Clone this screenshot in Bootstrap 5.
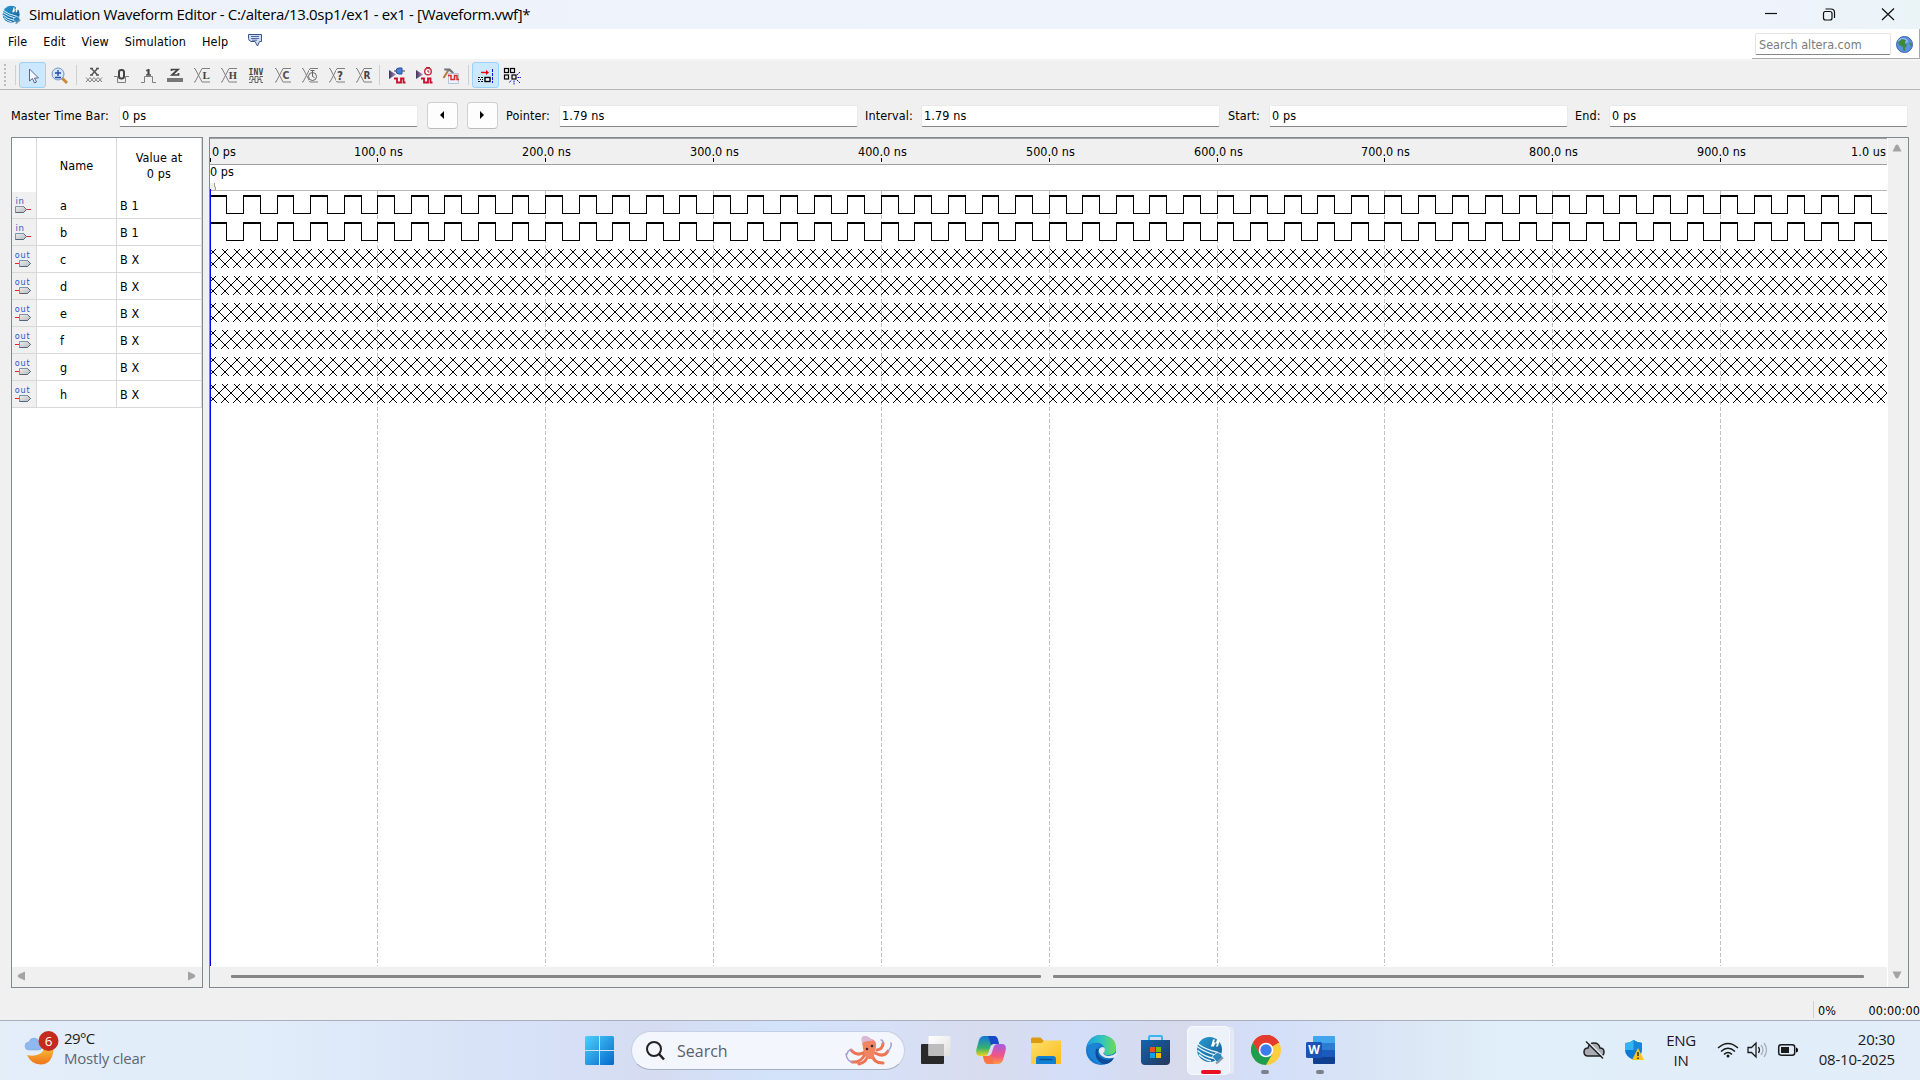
<!DOCTYPE html>
<html lang="en">
<head>
<meta charset="utf-8">
<title>Simulation Waveform Editor</title>
<link rel="stylesheet" href="https://cdn.jsdelivr.net/npm/bootstrap@5.3.0/dist/css/bootstrap.min.css">
<style>
  html, body { width: 1920px; height: 1080px; overflow: hidden; }
  body { font-family: "DejaVu Sans Condensed", "DejaVu Sans", sans-serif; font-stretch: condensed; font-size: 12.5px; letter-spacing: .13px; line-height: 16px; color: #000; background: #f0f0f0; }
  svg { display: block; flex: none; }
  .segoe { font-family: "Open Sans", "Noto Sans", sans-serif; font-stretch: normal; letter-spacing: 0; }
  .titlebar { height: 29px; background: linear-gradient(90deg, #eef3fb 0, #eff3fb 1750px, #eaf4f7 1920px); }
  .titlebar .caption { font-size: 15px; letter-spacing: -.35px; margin: 0 0 2px 8px; width: 502px; white-space: nowrap; }
  .menubar { height: 30px; background: #fff; }
  .menus { gap: 16px; padding: 5px 0 0 8px; }
  .sitesearch { width: 168px; border-right: 1px solid #aaa; border-bottom: 1px solid #aaa; padding: 4px 0 0 3px; }
  .sitebox { width: 136px; height: 22px; border: 1px solid #e4e4e4; border-bottom: 1px solid #868686; border-radius: 2px; color: #7b7b7b; padding: 3px 0 0 3px; font-size: 12.5px; letter-spacing: 0; white-space: nowrap; }
  .toolbar { height: 31px; border-top: 2px solid #f4f4f4; border-bottom: 1px solid #b7b7b7; background: #f0f0f0; padding-left: 4px; }
  .grip { width: 2px; height: 23px; background: repeating-linear-gradient(#bdbdbd 0 2px, transparent 2px 4px); }
  .rule { width: 1px; height: 20px; background: #d0d0d0; }
  .tool { width: 27px; height: 26px; display: flex; align-items: center; justify-content: center; border: 1px solid transparent; border-radius: 3px; padding-top: 1px; }
  .tool.on { background: #cce8ff; border-color: #99d1ff; }
  .timebar { height: 47px; padding: 12px 12px 0 11px; }
  .field { height: 22px; background: #fff; border: 1px solid #e9e9e9; border-bottom: 1px solid #868686; border-radius: 2px; padding: 2px 0 0 2px; width: 299px; flex: none; }
  .timebar .lbl { flex: none; white-space: nowrap; }
  .step { width: 31px; height: 27px; border: 1px solid #d0d0d0; border-bottom-color: #bbb; background: #fdfdfd; border-radius: 4px; display: flex; align-items: center; justify-content: center; flex: none; }
  .step svg { margin: -2px 2px 0 0; }
  .panes { height: 851px; padding-left: 11px; gap: 6px; }
  .pane { border: 1px solid #828790; background: #fff; }
  .signals { width: 192px; }
  .siggrid { display: grid; grid-template-columns: 25px 80px 85px; }
  .siggrid > div { border-right: 1px solid #d8d8d8; }
  .hd { height: 54px; display: flex; align-items: center; justify-content: center; text-align: center; padding-top: 2px; }
  .cellx { height: 27px; border-bottom: 1px solid #d8d8d8; display: flex; align-items: center; padding-top: 2px; }
  .icocell { background: #f0f0f0; padding-top: 0; }
  .hbar { height: 20px; background: #f0f0f0; margin-top: auto; padding-bottom: 2px; }
  .waves { width: 1700px; }
  .vbar { width: 21px; background: #f0f0f0; border-left: 1px solid #fff; }
  .status { height: 32px; padding-top: 13px; }
  .status .part { border-left: 1px solid #d0d0d0; width: 107px; height: 17px; padding-left: 4px; padding-top: 2px; }
  .taskbar { height: 60px; border-top: 1px solid #a8b0c0; background: linear-gradient(90deg, #e3eef9 0, #e0ecf9 280px, #d7e1f7 520px, #d5dcf2 660px, #d2e3fa 780px, #d6e0f7 880px, #d8dcee 980px, #d3def8 1080px, #d7daeb 1180px, #d3dff9 1270px, #dbe6f5 1400px, #e0eff9 1500px, #e2edf9 1920px); font-size: 15px; line-height: 20px; color: #1b1b1b; }
  .pill { width: 274px; height: 39px; border-radius: 20px; background: #f3f6fd; border: 1px solid #c5d0e4; border-bottom-color: #a5afc2; }
  .apptile { width: 55px; height: 59px; position: relative; display: flex; align-items: center; justify-content: center; flex: none; }
  .run::after { content: ""; position: absolute; bottom: 6px; left: 23px; width: 8px; height: 4px; border-radius: 2px; background: #7b828d; }
  .active-app::after { content: ""; position: absolute; bottom: 6px; left: 18px; width: 20px; height: 4px; border-radius: 2px; background: #e81123; }
  .active-app > .plate { position: absolute; left: 4px; top: 5px; width: 43px; height: 49px; border-radius: 5px; background: #edf1fa; border: 1px solid #f7f9fd; box-shadow: 5px 0 0 -1px #e3e9f7; }
  .active-app > svg { position: relative; }
</style>
<script src="https://cdn.jsdelivr.net/npm/bootstrap@5.3.0/dist/js/bootstrap.bundle.min.js"></script>
</head>
<body class="d-flex flex-column">

<svg width="0" height="0" class="position-absolute">
  <defs>
    <linearGradient id="gBall" x1="0" y1="0" x2="1" y2="1"><stop offset="0" stop-color="#2a9bd4"/><stop offset="1" stop-color="#135c93"/></linearGradient>
    <linearGradient id="gWin" x1="0" y1="0" x2="1" y2="1"><stop offset="0" stop-color="#4cd0fb"/><stop offset="1" stop-color="#0369cd"/></linearGradient>
    <linearGradient id="gPin" x1="0" y1="0" x2="1" y2="1"><stop offset="0" stop-color="#eee"/><stop offset="1" stop-color="#b5b9bd"/></linearGradient>
    <linearGradient id="gTri" x1="0" y1="0" x2="1" y2="0"><stop offset="0" stop-color="#3f3258"/><stop offset="1" stop-color="#a890c8"/></linearGradient>
    <symbol id="quartus" viewBox="0 0 28 28">
      <circle cx="13.5" cy="13" r="12.5" fill="url(#gBall)"/>
      <path d="M1 10Q9 16 21 19M1.500 7Q9 13 22 16M1.500 14Q8 20 18 22M3 18Q8 23 15 24.500" fill="none" stroke="#e6f5fd" stroke-width="1.400"/>
      <path d="M15 10l2-7h2l-1 3h2l1-3h3l-2 7h-2l1-3h-2l-1 3z" fill="#fff"/>
      <path d="M16 20l5-4 4 1 2 5-5 5z" fill="#2c87bd" stroke="#d8e8f2"/>
      <path d="M20 27l7-6" stroke="#8c98a2" stroke-width="2"/>
    </symbol>
    <symbol id="pinIn" viewBox="0 0 18 18">
      <path d="M11 13.500h5" stroke="#e22"/><path d="M.5 10.500h8l3 3-3 3h-8z" fill="url(#gPin)" stroke="#7e93ad"/><path d="M8.500 10.500l3 3-3 3h-8" fill="none" stroke="#55657a"/>
      <text x=".5" y="8" font-family="DejaVu Sans" font-size="9.500" fill="#3355bb" textLength="8.500">in</text>
    </symbol>
    <symbol id="pinOut" viewBox="0 0 18 18">
      <path d="M0 13.500h5" stroke="#e22"/><path d="M4.500 10.500h8l3 3-3 3h-8z" fill="url(#gPin)" stroke="#7e93ad"/><path d="M12.500 10.500l3 3-3 3h-8" fill="none" stroke="#55657a"/>
      <text x="-.3" y="8" font-family="DejaVu Sans" font-size="9" fill="#3355bb" textLength="15">out</text>
    </symbol>
    <symbol id="bus" viewBox="0 0 18 18"><path d="M1 1.500h1l7 13.500h8M1 15h1l7-13.500h8" fill="none" stroke="#808080"/></symbol>
  </defs>
</svg>

<div class="titlebar d-flex align-items-center">
  <svg style="margin-left:2px" width="19" height="20"><use href="#quartus"/></svg>
  <div class="caption segoe">Simulation Waveform Editor - C:/altera/13.0sp1/ex1 - ex1 - [Waveform.vwf]*</div>
  <svg class="ms-auto" width="156" height="29" fill="none" stroke="#111" stroke-width="1.200">
    <path d="M1 13.500h12"/><path d="M60.500 11.500h5.500q2 0 2 2v4.500q0 2-2 2h-4.500q-2 0-2-2v-4.500q0-2 2-2M61.500 9h5.500q3.500 0 3.500 3.500v5.500" /><path d="M118 8.500l12 11.500M130 8.500l-12 11.500"/>
  </svg>
</div>

<div class="menubar d-flex">
  <div class="menus d-flex align-items-start">
    <span>File</span><span>Edit</span><span>View</span><span>Simulation</span><span>Help</span>
    <svg style="margin:-1px 0 0 3px" width="16" height="15"><path d="M1.500 1.500h13v7h-2l-2 4.500-2.500-4.500h-4q-2.500-1-2.500-3z" fill="#cfdcf2" stroke="#3d5687"/><path d="M4 3.500h8M4 5.500h8M5 7.200h5" stroke="#33507e" stroke-width=".8"/></svg>
  </div>
  <div class="sitesearch d-flex ms-auto gap-1">
    <div class="sitebox">Search altera.com</div>
    <svg style="margin:3px 0 0 1px" width="17" height="17"><circle cx="8.500" cy="8.500" r="8" fill="#5b8fe0" stroke="#3c62b4"/><ellipse cx="7" cy="5" rx="5" ry="3" fill="#a9cbf6" opacity=".7"/><path d="M2 6l4-3 4 1-1 3 2 2-2 3v3l-2-1v-3l-4-2zM13 6l3 2-1 3z" fill="#3d8a3c"/></svg>
  </div>
</div>

<div class="toolbar d-flex align-items-center">
  <div class="grip"></div><div class="rule" style="margin:0 3px 0 9px"></div>
  <div class="tool on"><svg width="18" height="18"><path d="M5.500 2v12l3-2.500 2 4.500 2-1-2-4h4z" fill="#f4f7fd" stroke="#5b6788"/></svg></div>
  <div class="tool"><svg width="18" height="18"><path d="M11 11l5 5" stroke="#c98a3c" stroke-width="3"/><circle cx="7" cy="7" r="6" fill="#d4e6fb" stroke="#6f95c6"/><path d="M4 6h6M7 3v6M4 10.500h6" stroke="#2348b0" stroke-width="1.300"/></svg></div>
  <div class="rule" style="margin:0 3px 0 3px"></div>
  <div class="tool"><svg width="18" height="18"><path d="M5 1.500h3M11 1.500h3M5 8h3M11 8h3M6.500 1.500l6 6.500M12.500 1.500l-6 6.500" stroke="#555" stroke-width="1.500"/><path d="M1 10.500l4 4.500 4-4.500 4 4.500 4-4.500M1 15l4-4.500 4 4.500 4-4.500 4 4.500" fill="none" stroke="#808080"/></svg></div>
  <div class="tool"><svg width="18" height="18"><path d="M2 9.500h3.500v6h8v-6h3.500" fill="none" stroke="#808080"/><rect x="7" y="3" width="5" height="8.500" rx="2.200" fill="none" stroke="#444" stroke-width="2"/></svg></div>
  <div class="tool"><svg width="18" height="18"><path d="M2 15.500h3.500v-6h8v6h3.500" fill="none" stroke="#808080"/><path d="M7 3.500h2.500v4M7 8h5" fill="none" stroke="#555" stroke-width="1.300"/><path d="M9.500 2v6" stroke="#444" stroke-width="2"/></svg></div>
  <div class="tool"><svg width="18" height="18"><path d="M5.500 4v-1.500h6.500l-6 5.500h6.500v-2" fill="none" stroke="#444" stroke-width="1.700"/><rect x="1" y="11" width="16" height="4" fill="#777"/></svg></div>
  <div class="tool"><svg width="18" height="18"><use href="#bus"/><rect x="9" y="4" width="8" height="9" fill="#f0f0f0"/><text x="9.500" y="12" font-family="Liberation Serif" font-weight="bold" font-size="11" fill="#444">L</text></svg></div>
  <div class="tool"><svg width="18" height="18"><use href="#bus"/><rect x="9" y="4" width="8" height="9" fill="#f0f0f0"/><text x="8.800" y="12" font-family="Liberation Serif" font-weight="bold" font-size="10.500" fill="#444">H</text></svg></div>
  <div class="tool"><svg width="18" height="18"><text x="1.500" y="7.500" font-family="DejaVu Sans Mono" font-weight="bold" font-size="8" textLength="15" fill="#444">INV</text><path d="M2 12.500h1v-3h3v3h2v-3h3v3h2v-3h3M2 15.500h3v-3h3v3h3v-3h3v3h2" fill="none" stroke="#666"/></svg></div>
  <div class="tool"><svg width="18" height="18"><use href="#bus"/><rect x="9" y="4" width="8" height="9" fill="#f0f0f0"/><text x="8.500" y="12" font-family="DejaVu Sans" font-weight="bold" font-size="10.500" fill="#555">C</text></svg></div>
  <div class="tool"><svg width="18" height="18"><use href="#bus"/><rect x="8" y="3" width="9" height="11" fill="#f0f0f0"/><circle cx="11.500" cy="9.500" r="4" fill="none" stroke="#666"/><path d="M9.500 3.500h4M11.500 3.500v6l2 1" stroke="#666" fill="none"/></svg></div>
  <div class="tool"><svg width="18" height="18"><use href="#bus"/><rect x="8" y="3" width="9" height="11" fill="#f0f0f0"/><text x="9" y="12.500" font-family="DejaVu Sans" font-weight="bold" font-size="11.500" fill="#444">?</text></svg></div>
  <div class="tool"><svg width="18" height="18"><use href="#bus"/><rect x="9" y="4" width="8" height="9" fill="#f0f0f0"/><text x="8.500" y="12" font-family="DejaVu Sans" font-weight="bold" font-size="10" fill="#444">R</text></svg></div>
  <div class="rule" style="margin:0 3px 0 2px"></div>
  <div class="tool"><svg width="18" height="18"><path d="M1 3l7 4.500-7 4.500z" fill="url(#gTri)"/><path d="M6 4h2M14 4h3" stroke="#444"/><path d="M8 4q0-3 3-3h3v6h-3q-3 0-3-3z" fill="#4c7fd0" stroke="#2a4f9c"/><path d="M6 11.500h3v4h4v-4h2.500v4h2" fill="none" stroke="#c8102e" stroke-width="1.800"/></svg></div>
  <div class="tool"><svg width="18" height="18"><path d="M1 3l7 4.500-7 4.500z" fill="url(#gTri)"/><circle cx="13" cy="4.500" r="3.300" fill="#fff" stroke="#c8334e" stroke-width="1.500"/><path d="M13 3v2h1.500M11 .5h4" stroke="#a22" fill="none"/><path d="M6 11.500h3v4h4v-4h2.500v4h2" fill="none" stroke="#c8102e" stroke-width="1.800"/></svg></div>
  <div class="tool"><svg width="18" height="18"><path d="M6.500 6.500h10v10h-10z" fill="#eef2fb" stroke="#b6c3dc"/><path d="M6.500 3l-5 8" stroke="#b87939" stroke-width="2"/><path d="M2 1.500l6 0 4 4-1.500 1-4-3-4 0z" fill="#6a737d"/><path d="M6 8.500h3v4h3.500v-4h2.500v4h2" fill="none" stroke="#e02a2a" stroke-width="1.500"/></svg></div>
  <div class="rule" style="margin:0 3px 0 4px"></div>
  <div class="tool on"><svg width="18" height="18"><path d="M4 5.500h6" stroke="#e00" stroke-width="1.400"/><path d="M9 3l3 2.500-3 2.500z" fill="#e00"/><path d="M15.500 2v14" stroke="#1414e0" stroke-dasharray="3 1"/><path d="M1 10.500h6M1 14.500h6" stroke="#000" stroke-dasharray="2 1"/><path d="M1 12.500h6" stroke="#000" stroke-dasharray="1 1"/><rect x="8" y="10.500" width="5" height="4" fill="#fff" stroke="#000" stroke-width="1.400"/></svg></div>
  <div class="tool"><svg width="18" height="18" style="margin-left:-1px"><g fill="none" stroke="#000" stroke-width="1.200"><rect x="1.500" y="1.500" width="4" height="4"/><rect x="7.500" y="1.500" width="4" height="4"/><rect x="1.500" y="8" width="4" height="4"/><rect x="9" y="8" width="4" height="4"/></g><path d="M14 8l3-3M14.500 10.500h3.500M14 13l3 3M11 13.500v4M8 13.500l-2 2.500" stroke="#1414e0" stroke-dasharray="2 .6"/></svg></div>
</div>

<div class="timebar d-flex align-items-start">
  <div class="d-flex align-items-center" style="height:27px">
    <span class="lbl" style="width:108px">Master Time Bar:</span><div class="field">0 ps</div>
    <div class="step" style="margin-left:9px"><svg width="6" height="8"><path d="M5 0v8l-4-4z"/></svg></div>
    <div class="step" style="margin-left:9px"><svg width="6" height="8"><path d="M1 0v8l4-4z"/></svg></div>
    <span class="lbl" style="width:53px;margin-left:8px">Pointer:</span><div class="field">1.79 ns</div>
    <span class="lbl" style="width:56px;margin-left:7px">Interval:</span><div class="field">1.79 ns</div>
    <span class="lbl" style="width:41px;margin-left:8px">Start:</span><div class="field">0 ps</div>
    <span class="lbl" style="width:34px;margin-left:7px">End:</span><div class="field">0 ps</div>
  </div>
</div>

<div class="panes d-flex">
  <div class="pane signals d-flex flex-column">
    <div class="siggrid" id="siggrid">
      <div class="hd"></div><div class="hd">Name</div><div class="hd">Value at<br>0 ps</div>
    </div>
    <div class="hbar d-flex align-items-center justify-content-between px-1">
      <svg width="12" height="12"><path d="M9 1.500v9l-6.500-3q-1.500-1.500 0-3z" fill="#a3a3a3"/></svg>
      <svg width="12" height="12"><path d="M2 1.500v9l6.500-3q1.500-1.500 0-3z" fill="#a3a3a3"/></svg>
    </div>
  </div>
  <div class="pane waves d-flex">
    <div class="d-flex flex-column">
      <svg id="plot" width="1677" height="829" viewBox="210 138 1677 829" font-size="12.5"></svg>
      <div class="hbar d-flex align-items-center" style="padding-left:21px">
        <svg width="1640" height="3" fill="#858585"><rect width="810" height="3" rx="1"/><rect x="822" width="811" height="3" rx="1"/></svg>
      </div>
    </div>
    <div class="vbar d-flex flex-column justify-content-between align-items-center" style="padding:4px 2px 6px 0">
      <svg width="12" height="12"><path d="M1.500 9.500h9l-3-6q-1.500-2-3 0z" fill="#a3a3a3"/></svg>
      <svg width="12" height="12"><path d="M1.500 2.500h9l-3 6q-1.500 2-3 0z" fill="#a3a3a3"/></svg>
    </div>
  </div>
</div>

<div class="status d-flex justify-content-end">
  <div class="part d-flex justify-content-between"><span>0%</span><span class="text-nowrap">00:00:00</span></div>
</div>

<div class="taskbar segoe d-flex align-items-center">
  <div class="d-flex align-items-center" style="width:572px;padding-left:24px">
    <svg width="36" height="36" style="margin-top:-6px"><defs><linearGradient id="gm" x1="0" y1="0" x2="0" y2="1"><stop offset="0" stop-color="#f9c23c"/><stop offset="1" stop-color="#ee7418"/></linearGradient></defs><path d="M3 25q4 9 13.500 9.500q12-.5 13-15l-9-3q-1 6-6 8-5 2-11.500.5z" fill="url(#gm)"/><path d="M5 20q-4 0-4-4 0-4 4-4 1-4 5-4t5 4q3 0 3 4t-3 4z" fill="#8fb8ef" stroke="#79a3e3" stroke-width=".5"/><circle cx="24.500" cy="11" r="10" fill="#c42b1c"/><text x="24.500" y="16" text-anchor="middle" font-size="13.500" fill="#fff">6</text></svg>
    <div style="margin:-5px 0 0 4px"><div style="letter-spacing:-.6px">29°C</div><div style="color:#5f6670;letter-spacing:-.22px" class="text-nowrap">Mostly clear</div></div>
  </div>
  <div class="apptile"><svg width="29" height="29"><path d="M0 1.500q0-1.500 1.500-1.500h12.500v14h-14zM15 0h12.500q1.500 0 1.500 1.500v12.500h-14zM0 15h14v14h-12.500q-1.500 0-1.500-1.500zM15 15h14v12.500q0 1.500-1.500 1.500h-12.500z" fill="url(#gWin)"/></svg></div>
  <div class="pill d-flex align-items-center" style="margin-left:4px;padding-left:14px;padding-right:11px">
    <svg width="20" height="20" fill="none" stroke="#222"><circle cx="8" cy="8" r="7" stroke-width="2"/><path d="M13 13l5 5.500" stroke-width="2.600"/></svg>
    <span style="margin-left:11px;font-size:16px;color:#5b5f66">Search</span>
    <svg class="ms-auto" width="48" height="32" fill="none" stroke-linecap="round">
      <g stroke="#ee7553" stroke-width="3"><path d="M20 19q-4 9-13 8M23 20q-2 8-9 9M27 19q1 9 11 9M30 18q9 5 13-2M20 17q-8 5-14-2M32 15q6-1 6-7"/></g>
      <g stroke="#a69bd6" stroke-width="1.500"><path d="M7 27q-5-1-6-8M6 15q-3 0-4 4M43 16q4-4 3-8M38 8q0-3-2-3"/></g>
      <path d="M17 3q4-4 9 1 6 1 5 8-1 6-3 12h-6q-5-8-5-21z" fill="#f28561"/><path d="M17 8q-2-8 3-7 5 1 8 5-5-1-11 2z" fill="#d9b8d8"/><circle cx="22" cy="14" r="1.300" fill="#423"/><circle cx="27" cy="11" r="1.300" fill="#423"/>
    </svg>
  </div>
  <div class="d-flex" style="margin-left:3px;margin-top:-1px">
    <div class="apptile"><svg width="30" height="28"><defs><linearGradient id="tv" x1="0" y1="0" x2="1" y2="1"><stop offset="0" stop-color="#fff"/><stop offset="1" stop-color="#e0e0e0"/></linearGradient></defs><rect y="8" width="23" height="20" rx="1" fill="#292929"/><rect x="7.500" width="22" height="20" rx="1" fill="url(#tv)"/><rect x="7.500" y="8" width="15.500" height="12" fill="#bdbdbd"/></svg></div>
    <div class="apptile"><svg width="30" height="28"><defs><linearGradient id="c1" x1="0" y1="0" x2="0" y2="1"><stop offset="0" stop-color="#1676dc"/><stop offset=".6" stop-color="#35b26f"/><stop offset="1" stop-color="#f0d51c"/></linearGradient><linearGradient id="c2" x1="0" y1="0" x2="0" y2="1"><stop offset="0" stop-color="#a65be8"/><stop offset=".6" stop-color="#f2567f"/><stop offset="1" stop-color="#ff9b48"/></linearGradient></defs><path d="M8 0h10q3 0 4 4l1 4h-5q-3 0-4 4l-2 6q-1 2-4 2h-4q-5 0-3.500-7l2.500-9q1.500-4 5-4z" fill="url(#c1)"/><path d="M12 0h6q3 0 4 4l1 4h-5q-2 0-3 1z" fill="#1749c8"/><path d="M22 28h-10q-3 0-4-4l-1-4h5q3 0 4-4l2-6q1-2 4-2h4q5 0 3.500 7l-2.500 9q-1.500 4-5 4z" fill="url(#c2)"/><path d="M18 28h-6q-3 0-4-4l-1-4h5q2 0 3-1z" fill="#f9703f" opacity=".8"/></svg></div>
    <div class="apptile"><svg width="30" height="28" style="margin-top:2px"><defs><linearGradient id="fo" x1="0" y1="0" x2="1" y2="1"><stop offset="0" stop-color="#ffdf6b"/><stop offset="1" stop-color="#fbbb1c"/></linearGradient></defs><path d="M0 2q0-1.500 1.500-1.500h8l3 3v4h-12.500z" fill="#dc9a10"/><path d="M0 6h11l2-2.500h17v22.500q0 1-1 1h-28q-1 0-1-1z" fill="url(#fo)"/><path d="M5 27v-5q0-3 3-3h14q3 0 3 3v5z" fill="#1180d2"/><path d="M9 22.500h12" stroke="#0a5296" stroke-width="1.500" stroke-linecap="round"/></svg></div>
    <div class="apptile"><svg width="30" height="30"><defs><linearGradient id="e1" x1="0" y1="0" x2="1" y2="0"><stop offset="0" stop-color="#1d9fde"/><stop offset=".5" stop-color="#30c5c0"/><stop offset="1" stop-color="#6fdc50"/></linearGradient></defs><circle cx="15" cy="15" r="15" fill="#1777cb"/><path d="M1 11q3-11 14-11 15 1 15 13 0 7-7 7-5 0-6-2 3-2 1-6-3-5-9-4-5 1-8 3z" fill="url(#e1)"/><path d="M9 14q-2 11 8 15 7 1 11-6-8 4-14-1-4-4-1-8z" fill="#0d4c9a"/><path d="M13 14q4-4 6 0 0 3-2 4 1 3 6 3 4 0 7-3l0 4q-9 3-14-1-4-3-3-7z" fill="#e4e8f4"/><path d="M1 11q0 12 12 18l4 1q-10-7-7-16 2-4 6-4-8-4-15 1z" fill="#1b84d4"/></svg></div>
    <div class="apptile"><svg width="29" height="30"><defs><linearGradient id="st" x1="0" y1="0" x2="1" y2="1"><stop offset="0" stop-color="#0e66b5"/><stop offset="1" stop-color="#283656"/></linearGradient></defs><path d="M8 6v-4q0-1 1-1h11q1 0 1 1v4" fill="none" stroke="#35b7f0" stroke-width="2"/><path d="M0 5h29v21q0 4-4 4h-21q-4 0-4-4z" fill="url(#st)"/><path d="M9 12h5v5h-5z" fill="#f25022"/><path d="M15 12h5v5h-5z" fill="#7fba00"/><path d="M9 18h5v5h-5z" fill="#00a4ef"/><path d="M15 18h5v5h-5z" fill="#ffb900"/></svg></div>
    <div class="apptile active-app"><div class="plate"></div><svg width="28" height="29" style="margin-left:-1px"><use href="#quartus"/></svg></div>
    <div class="apptile run"><svg width="30" height="30" viewBox="0 0 30 30"><circle cx="15" cy="15" r="15" fill="#ffcd40"/><path d="M15 15L2 7.500a15 15 0 0 1 26 0z" fill="#e33b2e"/><path d="M2 7.500a15 15 0 0 0 13 22.500l6.500-11.300-13-1z" fill="#1f9d4f"/><path d="M15 8h13.300a15 15 0 0 0-26.300-.5l6.500 11z" fill="#e33b2e"/><circle cx="15" cy="15" r="7.300" fill="#fff"/><circle cx="15" cy="15" r="5.700" fill="#3b7ded"/></svg></div>
    <div class="apptile run"><svg width="30" height="28"><path d="M8 0h20q1 0 1 1v6h-22v-6q0-1 1-1z" fill="#41a5ee"/><path d="M7 7h22v7h-22z" fill="#2b7cd3"/><path d="M7 14h22v7h-22z" fill="#185abd"/><path d="M7 21h22v6q0 1-1 1h-20q-1 0-1-1z" fill="#103f91"/><rect y="6" width="16" height="16" rx="1.500" fill="#1a53b4"/><text x="8" y="18" text-anchor="middle" font-size="12" font-weight="bold" fill="#fff">W</text></svg></div>
  </div>
  <div class="d-flex align-items-center ms-auto" style="padding-right:25px;margin-top:-2px">
    <svg width="22" height="20"><path d="M5 16q-4 0-4-4t4-4q1-5 6-5t6 5q4 0 4 4t-4 4z" fill="#a9adb3" stroke="#222" stroke-width="1.500"/><path d="M5.500 2l17 17" stroke="#e3edf8" stroke-width="1.500"/><path d="M3 1.500l17 17" stroke="#222" stroke-width="1.400"/></svg>
    <svg width="20" height="22" style="margin-left:19px"><path d="M9.500 1q4 3 8.500 3v7q0 6-8.500 10-8.500-4-8.500-10v-7q5 0 8.500-3z" fill="#0b79d6"/><path d="M9.500 1q4 3 8.500 3v7h-17v-7q5 0 8.500-3z" fill="#35b2f2"/><path d="M9.500 1q4 3 8.500 3v7h-8.500z" fill="#1586dc"/><path d="M14 9l6 12h-12z" fill="#fcc419"/><path d="M14 13v4M14 18.500v1.500" stroke="#222" stroke-width="1.400"/></svg>
    <div class="text-center" style="margin-left:22px;width:30px;letter-spacing:-.3px">ENG<br>IN</div>
    <svg width="22" height="18" style="margin-left:21px" fill="none" stroke="#1b1b1b" stroke-width="1.500"><path d="M1 7q10-9 20 0M4 10.500q7-6.500 14 0M7 13.500q4-4 8 0"/><circle cx="11" cy="15" r="1.500" fill="#1b1b1b" stroke="none"/></svg>
    <svg width="22" height="18" style="margin-left:8px" fill="none" stroke="#1b1b1b" stroke-width="1.300"><path d="M1 6.500h3.500l4.500-4.500v14l-4.500-4.500h-3.500zM11.500 6q2 3 0 6"/><path d="M14 4q4 5 0 10M17 2q5 7 0 14" stroke="#a7aeb8"/></svg>
    <svg width="22" height="16" style="margin-left:8px"><rect x="1.700" y="2.700" width="16" height="10.600" rx="2.500" fill="none" stroke="#1b1b1b" stroke-width="1.500"/><rect x="4" y="5" width="8" height="6" fill="#1b1b1b"/><path d="M19 5.500q2 0 2 2.500t-2 2.500z"/></svg>
    <div class="text-end text-nowrap" style="margin:-2px 0 0 18px;width:78px;letter-spacing:-.2px">20:30<br>08-10-2025</div>
  </div>
</div>

<script>
  // Signal list
  const grid = document.getElementById('siggrid');
  'abcdefgh'.split('').forEach((name, i) => {
    const input = i < 2;
    grid.insertAdjacentHTML('beforeend',
      `<div class="cellx icocell ps-1"><svg width="18" height="18" style="margin-left:-1px"><use href="#${input ? 'pinIn' : 'pinOut'}"/></svg></div>
       <div class="cellx" style="padding-left:23px">${name}</div>
       <div class="cellx" style="padding-left:3px">B ${input ? '1' : 'X'}</div>`);
  });

  // Waveform plot: 10 ns steps of 16.785 px
  const X0 = 210, STEP = 16.785, XE = 1887;
  const px = n => Math.floor(X0 + STEP * n);
  let s = `<rect x="210" y="138" width="1677" height="26" fill="#f0f0f0"/>
    <path d="M210 138.500H1887M210 164.500H1887" stroke="#a0a0a0"/><path d="M210 190.500H1887" stroke="#b8b8b8"/>
    <path d="M210 183h4v3h1v4h-5z" fill="#f0f0f0"/><path d="M214.500 183v4h1v3" fill="none" stroke="#a0a0a0"/>`;
  for (let k = 0; k <= 9; k++) {
    const x = px(k * 10) + .5;
    s += `<path d="M${x} 158v4" stroke="#000"/>`;
    if (k) s += `<text x="${x - 23.500}" y="156" textLength="49">${k}00.0 ns</text><path d="M${x} 191V966" stroke="#c0c0c0" stroke-dasharray="4 2"/>`;
  }
  s += `<text x="212" y="156" textLength="24">0 ps</text><text x="210" y="176" textLength="24">0 ps</text><text x="1851" y="156" textLength="35">1.0 us</text>`;
  for (const y of [195, 222]) {
    let hi = '', lo = '';
    for (let n = 0; n < 100; n++) {
      const a = px(n), b = Math.min(px(n + 1), XE);
      if (n % 2 === 0) hi += `M${a} ${y + 1}H${b + 1}`;
      else lo += `M${a} ${y + 18.500}H${b}`;
      if (n) lo += `M${a + .5} ${y}V${y + 19}`;
    }
    s += `<path d="${hi}" stroke="#000" stroke-width="2"/><path d="${lo}" stroke="#000"/>`;
  }
  for (let r = 0; r < 6; r++) {
    const y = 249 + 27 * r;
    let d = '';
    for (let x = 186; x < XE + 24; x += 12) d += `M${x} ${y}l19 19M${x + 6} ${y}l-19 19`;
    s += `<path d="${d}" stroke="#000" stroke-width="1" fill="none" shape-rendering="crispEdges"/>`;
  }
  s += `<path d="M210.500 189V966" stroke="#0000ff"/>`;
  document.getElementById('plot').innerHTML = s;
</script>
</body>
</html>
